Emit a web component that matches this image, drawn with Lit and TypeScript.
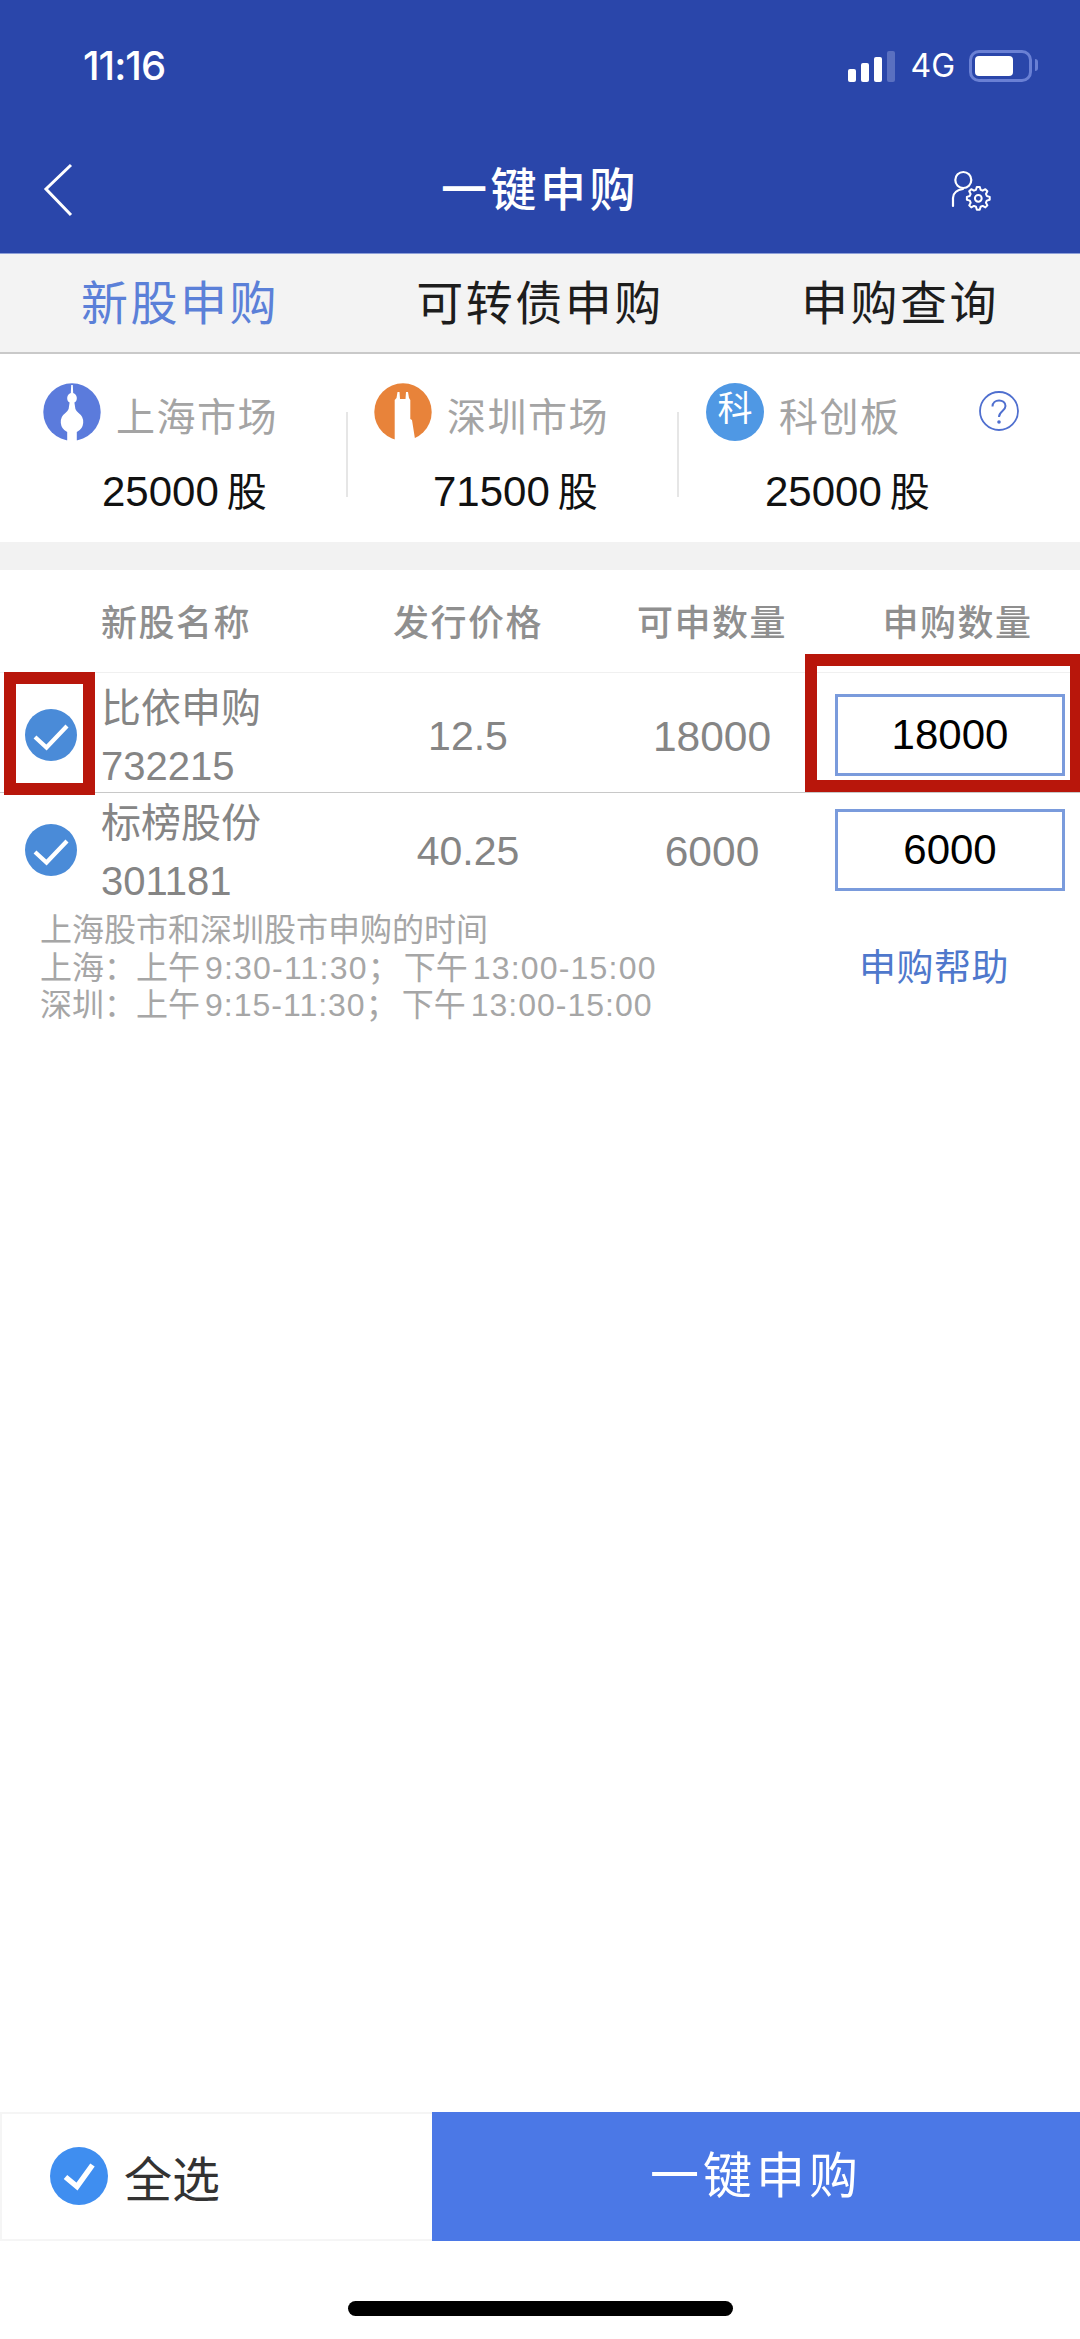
import { LitElement, html, css, svg } from 'lit';
import { customElement } from 'lit/decorators.js';

const stocks = [
  { name: '比依申购', code: '732215', price: '12.5', avail: '18000', qty: '18000' },
  { name: '标榜股份', code: '301181', price: '40.25', avail: '6000', qty: '6000' },
];

// outline of a small gear, teeth around a centre point
function gearPath(cx: number, cy: number, outer: number, inner: number, teeth: number) {
  const pts: string[] = [];
  const step = (Math.PI * 2) / teeth;
  for (let i = 0; i < teeth; i++) {
    const a = i * step - Math.PI / 2;
    const spots: Array<[number, number]> = [
      [a - step * 0.34, inner],
      [a - step * 0.16, outer],
      [a + step * 0.16, outer],
      [a + step * 0.34, inner],
    ];
    for (const [ang, r] of spots) {
      pts.push(`${(cx + Math.cos(ang) * r).toFixed(2)} ${(cy + Math.sin(ang) * r).toFixed(2)}`);
    }
  }
  return `M${pts.join('L')}Z`;
}

@customElement('app-root')
export class AppRoot extends LitElement {
  static styles = css`
    :host {
      display: block;
      position: relative;
      width: 1080px;
      height: 2339px;
      overflow: hidden;
      background: #fff;
      font-family: 'Liberation Sans', 'Noto Sans CJK SC', sans-serif;
    }

    .page {
      display: flex;
      flex-direction: column;
      height: 100%;
    }

    .header {
      height: 254px;
      box-sizing: border-box;
      background: #2a46aa;
      border-bottom: 1px solid #8d9fd8;
      color: #fff;
      flex: none;
    }

    .status {
      height: 132px;
      box-sizing: border-box;
      padding: 46px 48px 0 83px;
      display: flex;
      justify-content: space-between;
      align-items: flex-start;
    }

    .time {
      font-family: 'Inter', sans-serif;
      font-size: 40px;
      font-weight: 500;
      line-height: 40px;
      letter-spacing: -1px;
    }

    .status-right {
      display: flex;
      align-items: center;
      height: 40px;
    }

    .signal {
      display: flex;
      align-items: flex-end;
      gap: 5px;
      height: 32px;
      margin-right: 15px;
    }

    .signal i {
      display: block;
      width: 8px;
      border-radius: 2px;
      background: #fff;
    }

    .signal i.off {
      background: #5a70c0;
    }

    .net {
      font-family: 'Inter', sans-serif;
      font-size: 32px;
      line-height: 40px;
      margin-right: 14px;
    }

    .battery {
      position: relative;
      width: 63px;
      height: 32px;
      box-sizing: border-box;
      border: 3px solid #6a80d4;
      border-radius: 10px;
      padding: 3px;
    }

    .battery b {
      display: block;
      width: 38px;
      height: 20px;
      border-radius: 4px;
      background: #fff;
    }

    .battery::after {
      content: '';
      position: absolute;
      right: -9px;
      top: 6px;
      width: 3px;
      height: 12px;
      border-radius: 0 3px 3px 0;
      background: #6a80d4;
    }

    .nav {
      height: 116px;
      position: relative;
      display: flex;
      align-items: center;
      justify-content: center;
    }

    .nav h1 {
      margin: 0;
      font-size: 46px;
      font-weight: 500;
      letter-spacing: 3.5px;
      line-height: 60px;
    }

    .nav svg {
      position: absolute;
    }

    .back {
      left: 42px;
      top: 30px;
    }

    .user-gear {
      left: 940px;
      top: 28px;
    }

    .tabs {
      height: 100px;
      box-sizing: border-box;
      flex: none;
      display: flex;
      background: #f3f3f3;
      border-bottom: 2px solid #c9c9c9;
    }

    .tab {
      flex: 1;
      text-align: center;
      font-size: 47px;
      letter-spacing: 2.5px;
      line-height: 100px;
      color: #1d1d1d;
    }

    .tab.active {
      color: #5b80d8;
    }

    .markets {
      height: 188px;
      box-sizing: border-box;
      flex: none;
      display: flex;
      align-items: flex-start;
      padding: 29px 0 0 43px;
      position: relative;
    }

    .market {
      box-sizing: border-box;
    }

    .market.sh {
      width: 303px;
    }

    .market.sz {
      width: 329px;
      padding-left: 26px;
    }

    .market.star {
      padding-left: 27px;
    }

    .sep {
      flex: none;
      width: 2px;
      height: 85px;
      margin-top: 29px;
      background: #e6e6e6;
    }

    .market-top {
      display: flex;
      align-items: flex-start;
      gap: 15px;
    }

    .market-top svg {
      flex: none;
      display: block;
    }

    .market-icon {
      width: 58px;
      height: 58px;
      flex: none;
      border-radius: 50%;
      background: #4f98e4;
      color: #fff;
      font-size: 35px;
      line-height: 52px;
      text-align: center;
    }

    .market-name {
      font-size: 39px;
      letter-spacing: 1.5px;
      line-height: 50px;
      margin-top: 10px;
      color: #a4a4a4;
      white-space: nowrap;
    }

    .amount {
      margin: 24px 0 0 59px;
      line-height: 50px;
      font-size: 42px;
      color: #111;
      white-space: nowrap;
    }

    .amount span {
      font-size: 40px;
      margin-left: 8px;
    }

    .help {
      position: absolute;
      left: 979px;
      top: 37px;
    }

    .band {
      height: 28px;
      flex: none;
      background: #f2f2f2;
    }

    .grid {
      display: grid;
      grid-template-columns: 101px 267px 200px 267px 245px;
      align-items: center;
      flex: none;
    }

    .thead {
      height: 102px;
      box-sizing: border-box;
      padding-bottom: 2px;
      font-size: 36px;
      font-weight: 500;
      letter-spacing: 1.5px;
      color: #8f8f8f;
    }

    .thead div {
      text-align: center;
    }

    .thead .name-head {
      grid-column: 2;
      text-align: left;
    }

    .price {
      padding-top: 3px;
      text-align: center;
    }

    .avail {
      padding-left: 21px;
      text-align: center;
    }

    .row .avail {
      padding-top: 3px;
      font-size: 42.5px;
    }

    .row {
      font-size: 41px;
      color: #858585;
    }

    .row.first {
      border-top: 1px solid #f0f0f0;
      border-bottom: 1px solid #c8c8c8;
      padding-top: 5px;
    }

    .check {
      display: block;
      margin-left: 25px;
    }

    .name {
      font-size: 40px;
      line-height: 58px;
      margin: 1px 0 -3px;
      white-space: nowrap;
    }

    .qty {
      box-sizing: border-box;
      width: 230px;
      height: 82px;
      border: 3px solid #7a9bdc;
      color: #000;
      font-size: 42px;
      line-height: 76px;
      text-align: center;
    }

    .notes {
      display: flex;
      justify-content: space-between;
      align-items: center;
      flex: none;
      margin-top: 5px;
      padding: 0 71px 0 40px;
    }

    .rules {
      font-size: 32px;
      line-height: 37.5px;
      color: #a6a6a6;
      white-space: nowrap;
    }

    .rules span {
      letter-spacing: 1.2px;
      margin-left: 5px;
    }

    .rules .next {
      margin-left: 4px;
    }

    .rules .tight {
      letter-spacing: 1px;
    }

    .help-link {
      font-size: 37px;
      letter-spacing: 0.5px;
      margin-bottom: 6px;
      color: #4f78cc;
    }

    .spacer {
      flex: 1;
    }

    .footer {
      height: 129px;
      flex: none;
      display: flex;
    }

    .select-all {
      width: 432px;
      box-sizing: border-box;
      display: flex;
      align-items: center;
      gap: 16px;
      padding: 0 0 2px 48px;
      border: 2px solid #f5f5f5;
      border-right: none;
      font-size: 48px;
      color: #333;
    }

    .submit {
      flex: 1;
      text-align: center;
      background: #4b78e6;
      color: #fff;
      font-size: 49px;
      letter-spacing: 4px;
      line-height: 129px;
    }

    .home {
      height: 98px;
      flex: none;
      box-sizing: border-box;
      padding-top: 60px;
      display: flex;
      justify-content: center;
    }

    .home i {
      display: block;
      width: 385px;
      height: 15px;
      border-radius: 8px;
      background: #000;
    }

    .mark {
      position: absolute;
      box-sizing: border-box;
      border: 12px solid #b8160b;
    }

    .mark.left {
      left: 4px;
      top: 672px;
      width: 91px;
      height: 123px;
    }

    .mark.right {
      left: 805px;
      top: 654px;
      width: 275px;
      height: 138px;
      border-right-width: 10px;
    }
  `;

  private renderCheck() {
    return html`<svg class="check" width="52" height="52" viewBox="0 0 52 52">
      <circle cx="26" cy="26" r="26" fill="#4a8bd8"></circle>
      <path d="M10 28 L21.5 38.5 L42 17" fill="none" stroke="#fff" stroke-width="4.2"></path>
    </svg>`;
  }

  private renderRow(s: (typeof stocks)[number], first: boolean) {
    return html`
      <div class="grid row ${first ? 'first' : ''}">
        <div>${this.renderCheck()}</div>
        <div class="name">${s.name}<br />${s.code}</div>
        <div class="price">${s.price}</div>
        <div class="avail">${s.avail}</div>
        <div class="qty">${s.qty}</div>
      </div>
    `;
  }

  render() {
    return html`
      <div class="page">
        <div class="header">
          <div class="status">
            <div class="time">11:16</div>
            <div class="status-right">
              <div class="signal">
                <i style="height:13px"></i>
                <i style="height:19px"></i>
                <i style="height:25px"></i>
                <i class="off" style="height:31px"></i>
              </div>
              <div class="net">4G</div>
              <div class="battery"><b></b></div>
            </div>
          </div>
          <div class="nav">
            <svg class="back" width="34" height="56" viewBox="0 0 34 56">
              <path d="M29 3 L4 27 L29 53" fill="none" stroke="#fff" stroke-width="3"></path>
            </svg>
            <h1>一键申购</h1>
            <svg class="user-gear" width="60" height="60" viewBox="0 0 60 60" fill="none" stroke="#fff">
              <circle cx="23.3" cy="20" r="8" stroke-width="2.2"></circle>
              <path d="M13 46 V38 C13 32 17 30 23 29" stroke-width="2.2" stroke-linecap="round"></path>
              ${svg`<path d=${gearPath(38.3, 38.3, 11.5, 8.8, 8)} stroke-width="2" stroke-linejoin="round"></path>`}
              <circle cx="38.3" cy="38.3" r="3.4" stroke-width="2"></circle>
            </svg>
          </div>
        </div>

        <div class="tabs">
          <div class="tab active">新股申购</div>
          <div class="tab">可转债申购</div>
          <div class="tab">申购查询</div>
        </div>

        <div class="markets">
          <div class="market sh">
            <div class="market-top">
              <svg width="58" height="58" viewBox="0 0 58 58">
                <circle cx="29" cy="29" r="28.7" fill="#5b7bdc"></circle>
                <path d="M28.2 2 H29.8 L30.2 10 A5.4 5.4 0 0 1 31.4 19.6 L32.4 26 Q33.4 28.4 35.6 30 A11 11 0 0 1 33.8 49 V58 H24.2 V49 A11 11 0 0 1 22.4 30 Q24.6 28.4 25.6 26 L26.6 19.6 A5.4 5.4 0 0 1 27.8 10 Z" fill="#fff"></path>
              </svg>
              <div class="market-name">上海市场</div>
            </div>
            <div class="amount">25000<span>股</span></div>
          </div>
          <div class="sep"></div>
          <div class="market sz">
            <div class="market-top">
              <svg width="58" height="58" viewBox="0 0 58 58">
                <circle cx="29" cy="29" r="28.7" fill="#e8833a"></circle>
                <path d="M20.7 58 V17 L22.5 15 L23.5 9 H25.5 L26 16 H31.5 L32 9 H34 L35 15 L36.3 17 V36 L38 37 L41 56 V58 Z" fill="#fff"></path>
              </svg>
              <div class="market-name">深圳市场</div>
            </div>
            <div class="amount">71500<span>股</span></div>
          </div>
          <div class="sep"></div>
          <div class="market star">
            <div class="market-top">
              <div class="market-icon">科</div>
              <div class="market-name">科创板</div>
            </div>
            <div class="amount">25000<span>股</span></div>
          </div>
          <svg class="help" width="40" height="40" viewBox="0 0 40 40">
            <circle cx="20" cy="20" r="19" fill="none" stroke="#4f6fcf" stroke-width="1.8"></circle>
            <path d="M13.5 15.5 C13.5 7.5 26.5 7.5 26.5 15 C26.5 20 20 20 20 26" fill="none" stroke="#4f6fcf" stroke-width="2"></path>
            <circle cx="20" cy="31" r="1.8" fill="#4f6fcf"></circle>
          </svg>
        </div>

        <div class="band"></div>

        <div class="grid thead">
          <div class="name-head">新股名称</div>
          <div>发行价格</div>
          <div class="avail">可申数量</div>
          <div>申购数量</div>
        </div>

        ${stocks.map((s, i) => this.renderRow(s, i === 0))}

        <div class="notes">
          <div class="rules">
            上海股市和深圳股市申购的时间<br />
            上海：上午<span>9:30-11:30</span>；<i class="next"></i>下午<span>13:00-15:00</span><br />
            深圳：上午<span class="tight">9:15-11:30</span>；<i class="next"></i>下午<span class="tight">13:00-15:00</span>
          </div>
          <div class="help-link">申购帮助</div>
        </div>

        <div class="spacer"></div>

        <div class="footer">
          <div class="select-all">
            <svg width="58" height="58" viewBox="0 0 58 58">
              <circle cx="29" cy="29" r="29" fill="#3f8ef0"></circle>
              <path d="M15.5 30 L27 39.5 L42.5 18" fill="none" stroke="#fff" stroke-width="5.5"></path>
            </svg>
            全选
          </div>
          <div class="submit">一键申购</div>
        </div>

        <div class="home"><i></i></div>
      </div>

      <div class="mark left"></div>
      <div class="mark right"></div>
    `;
  }
}
